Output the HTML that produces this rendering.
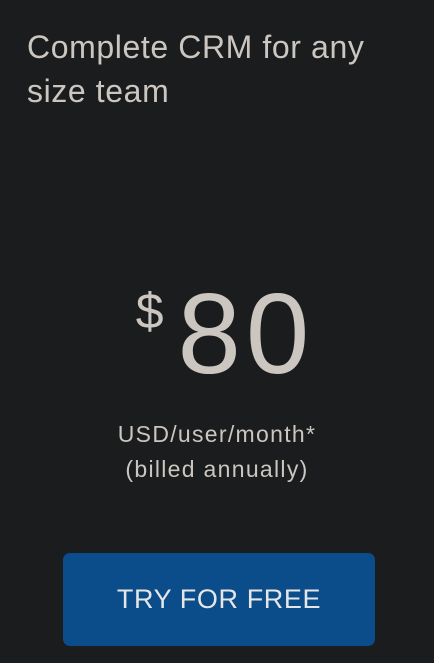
<!DOCTYPE html>
<html><head><style>
html,body{margin:0;padding:0;background:#1b1c1e;width:434px;height:663px;overflow:hidden;font-family:"Liberation Sans",sans-serif;color:#cbc6bf}
.t{position:absolute;left:27px;top:25px;font-size:32px;line-height:44px;width:390px;letter-spacing:0.6px}
.price{position:absolute;left:8px;width:434px;top:270px;text-align:center;white-space:nowrap}
.d{font-size:50px;vertical-align:top;position:relative;top:12px;margin-right:14px}
.n{font-size:114px;line-height:130px;letter-spacing:5px}
.u{position:absolute;left:0;width:434px;top:417px;text-align:center;font-size:23px;line-height:35px;letter-spacing:1.3px}
.b{position:absolute;left:63px;top:553px;width:312px;height:93px;background:#0b4c8a;border-radius:7px;color:#e6e6e6;font-size:27px;line-height:93px;text-align:center;letter-spacing:0.6px}
</style></head><body>
<div class="t">Complete CRM for any<br>size team</div>
<div class="price"><span class="d">$</span><span class="n">80</span></div>
<div class="u">USD/user/month*<br>(billed annually)</div>
<div class="b">TRY FOR FREE</div>
</body></html>
